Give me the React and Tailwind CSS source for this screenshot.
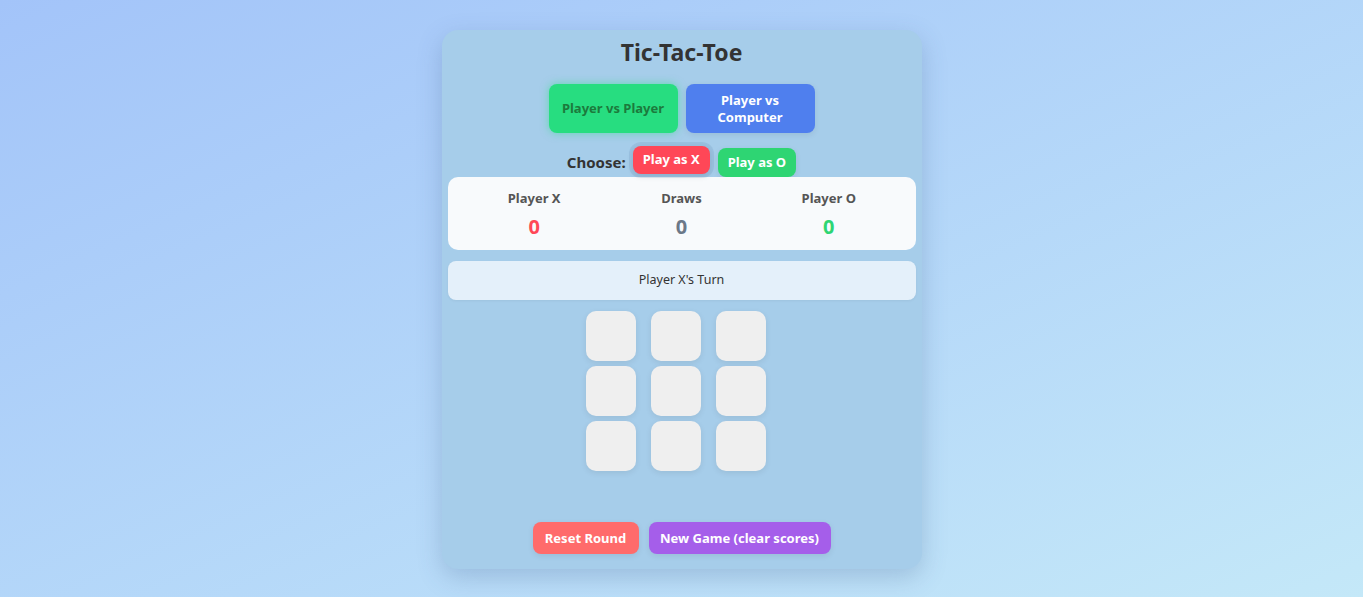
import { useState } from 'react'

const font = { fontFamily: '"Noto Sans", "Open Sans", Arial, sans-serif' }

export default function App() {
  const [mode, setMode] = useState('pvp')
  const [side, setSide] = useState('X')
  const [board, setBoard] = useState(Array(9).fill(null))

  return (
    <div
      className="min-h-screen w-full flex justify-center bg-gradient-to-br from-[#a3c4f9] to-[#c4e8f8]"
      style={font}
    >
      {/* Card */}
      <div className="mt-[30px] mb-[28px] w-[480px] h-[539px] bg-[#a6cdea] rounded-2xl shadow-[0_8px_24px_rgba(60,90,140,0.25)] px-[6px] pt-[7px] pb-[15px] flex flex-col">
        <h1 className="text-center text-[23px] leading-[30px] font-bold text-[#333]">Tic-Tac-Toe</h1>

        <div className="mt-[17px] flex justify-center gap-2">
          <button
            onClick={() => setMode('pvp')}
            className="w-[129px] h-[49px] rounded-lg bg-[#27dd80] text-[#1c7a3c] text-[13px] font-bold leading-[17px] shadow-[0_0_8px_rgba(40,220,130,0.55)]"
          >
            Player vs Player
          </button>
          <button
            onClick={() => setMode('pvc')}
            className="w-[129px] h-[49px] rounded-lg bg-[#4f7fee] text-white text-[13px] font-bold leading-[17px] px-6 shadow-[0_2px_6px_rgba(0,0,0,0.08)]"
          >
            Player vs Computer
          </button>
        </div>

        <div className="mt-[15px] h-[29px] flex justify-center items-center gap-2">
          <span className="text-[15px] font-bold text-[#333] mr-[-1px]">Choose:</span>
          <button
            onClick={() => setSide('X')}
            className="h-[28px] px-[10px] rounded-lg bg-[#ff4757] text-white text-[13px] font-bold -translate-y-[3px] shadow-[0_0_0_4px_rgba(100,140,180,0.18),0_2px_6px_rgba(0,0,0,0.12)]"
          >
            Play as X
          </button>
          <button
            onClick={() => setSide('O')}
            className="h-[29px] px-[10px] rounded-lg bg-[#2ed573] text-white text-[13px] font-bold shadow-[0_2px_6px_rgba(0,0,0,0.08)]"
          >
            Play as O
          </button>
        </div>

        {/* Scores */}
        <div className="h-[73px] rounded-[10px] bg-[#f8fafc] grid grid-cols-3 px-[13px] pt-[12px]">
          <div className="flex flex-col items-center">
            <span className="text-[13px] font-bold text-[#555]">Player X</span>
            <span className="text-[20px] font-bold text-[#ff4757] leading-[28px] mt-[4px]">0</span>
          </div>
          <div className="flex flex-col items-center">
            <span className="text-[13px] font-bold text-[#555]">Draws</span>
            <span className="text-[20px] font-bold text-[#6b7888] leading-[28px] mt-[4px]">0</span>
          </div>
          <div className="flex flex-col items-center">
            <span className="text-[13px] font-bold text-[#555]">Player O</span>
            <span className="text-[20px] font-bold text-[#2ed573] leading-[28px] mt-[4px]">0</span>
          </div>
        </div>

        {/* Status */}
        <div className="mt-[11px] h-[39px] rounded-lg bg-[#e4f0fa] flex items-center justify-center text-[12.5px] text-[#333] shadow-[0_1px_3px_rgba(0,0,0,0.05)]">
          Player {side}'s Turn
        </div>

        {/* Board */}
        <div className="mt-[11px] flex justify-center pr-[12px]">
          <div className="grid grid-cols-[50px_50px_50px] gap-x-[15px] gap-y-[5px]">
            {board.map((v, i) => (
              <button
                key={i}
                onClick={() => {
                  const b = board.slice()
                  b[i] = side
                  setBoard(b)
                }}
                className="w-[50px] h-[50px] rounded-[10px] bg-[#efefef] shadow-[0_2px_6px_rgba(0,0,0,0.08)] text-2xl font-bold text-[#333]"
              >
                {v}
              </button>
            ))}
          </div>
        </div>

        <div className="mt-auto flex justify-center gap-[10px]">
          <button
            onClick={() => setBoard(Array(9).fill(null))}
            className="h-[32px] w-[106px] pt-[2px] rounded-lg bg-[#ff6b6b] text-white text-[13px] font-bold shadow-[0_2px_6px_rgba(0,0,0,0.08)]"
          >
            Reset Round
          </button>
          <button
            onClick={() => setBoard(Array(9).fill(null))}
            className="h-[32px] w-[182px] pt-[2px] rounded-lg bg-[#a55eea] text-white text-[13px] font-bold shadow-[0_2px_6px_rgba(0,0,0,0.08)]"
          >
            New Game (clear scores)
          </button>
        </div>
      </div>
    </div>
  )
}
